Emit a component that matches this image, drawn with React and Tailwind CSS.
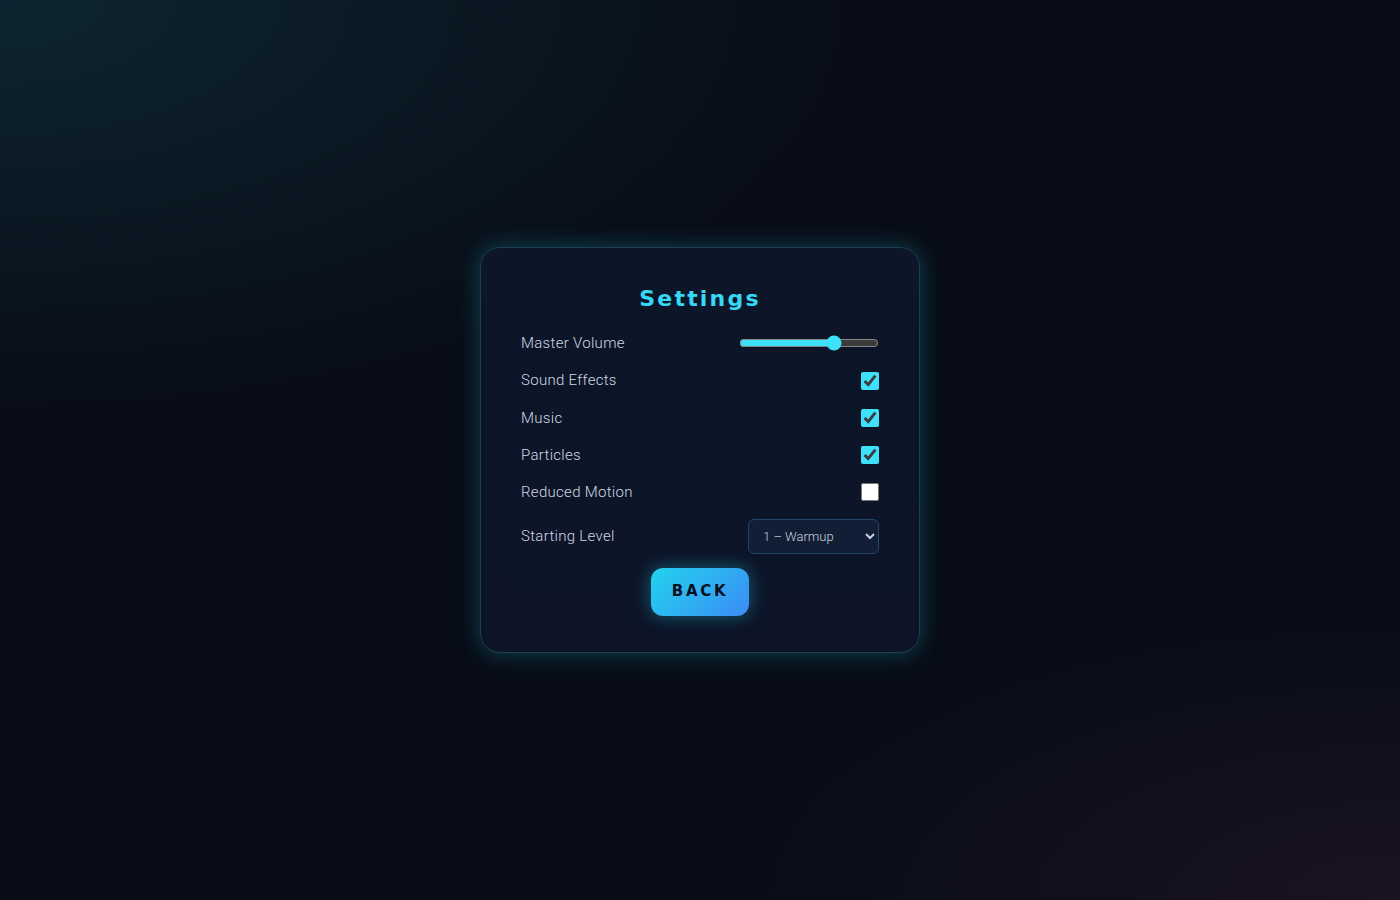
import { useState } from 'react';

const TOGGLES = [
  { id: 'sfx', label: 'Sound Effects', on: true },
  { id: 'music', label: 'Music', on: true },
  { id: 'particles', label: 'Particles', on: true },
  { id: 'reduced', label: 'Reduced Motion', on: false },
];

export default function App() {
  const [volume, setVolume] = useState(70);
  const [flags, setFlags] = useState(Object.fromEntries(TOGGLES.map(t => [t.id, t.on])));
  const [level, setLevel] = useState('1');

  return (
    <div className="relative w-full h-[900px] overflow-hidden bg-[#080d17] flex items-center justify-center font-['Roboto',sans-serif]">
      {/* background glows */}
      <div className="absolute inset-0 bg-[radial-gradient(ellipse_60%_45%_at_0%_0%,#0d2530_0%,rgba(8,13,23,0)_100%)]" />
      <div className="absolute inset-0 bg-[radial-gradient(ellipse_45%_30%_at_100%_100%,#1b1222_0%,rgba(8,13,23,0)_100%)]" />

      {/* Card */}
      <div className="relative w-[440px] rounded-[20px] border border-[#1d3f55] bg-[linear-gradient(180deg,#0c1628_0%,#0d1427_100%)] shadow-[0_0_22px_rgba(34,211,238,0.28)] px-10 pt-[35px] pb-[36px] flex flex-col">
        <h1 className="text-center text-[22px] leading-8 font-bold tracking-[0.1em] text-[#35d9f5] font-['DejaVu_Sans',sans-serif]">
          Settings
        </h1>

        <div className="mt-[16px] flex flex-col gap-[13.25px]">
          <div className="flex items-center justify-between h-6">
            <span className="text-[15px] font-light text-[#cfd8e3] tracking-[0.02em]">Master Volume</span>
            <input
              type="range" min="0" max="100" value={volume}
              onChange={e => setVolume(+e.target.value)}
              className="w-[140px] accent-[#3de1fa]"
            />
          </div>

          {TOGGLES.map(t => (
            <label key={t.id} className="flex items-center justify-between h-6">
              <span className="text-[15px] font-light text-[#cfd8e3] tracking-[0.02em]">{t.label}</span>
              <input
                type="checkbox" checked={flags[t.id]}
                onChange={e => setFlags({ ...flags, [t.id]: e.target.checked })}
                className="w-[18px] h-[18px] m-0 accent-[#3de1fa]"
              />
            </label>
          ))}

          <div className="flex items-center justify-between h-[35px] mt-[1px]">
            <span className="text-[15px] font-light text-[#cfd8e3] tracking-[0.02em]">Starting Level</span>
            <select
              value={level} onChange={e => setLevel(e.target.value)}
              className="w-[131px] h-[35px] rounded-md border border-[#1e4866] bg-[#111e36] text-[#c9d3df] text-[13px] font-light pl-[10px] pr-2 outline-none"
            >
              <option value="1">1 – Warmup</option>
              <option value="2">2 – Cruise</option>
              <option value="3">3 – Overdrive</option>
            </select>
          </div>
        </div>

        <button className="mt-[14px] self-center w-[98px] h-12 rounded-xl bg-[linear-gradient(135deg,#22d3ee_0%,#3b8cf6_100%)] shadow-[0_0_18px_rgba(34,211,238,0.4)] text-[#07111f] text-[15px] font-bold tracking-[0.18em] font-['DejaVu_Sans',sans-serif]">
          BACK
        </button>
      </div>
    </div>
  );
}
